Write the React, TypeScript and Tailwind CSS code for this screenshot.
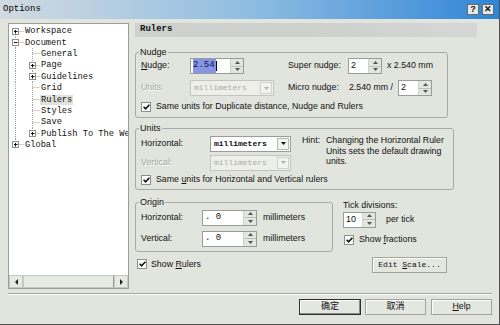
import React from 'react';

const sans = "font-['Liberation_Sans',Arial,sans-serif]";
const mono = "font-['Liberation_Mono','Courier_New',monospace]";
const cjk = "font-['Liberation_Sans','Noto_Sans_CJK_SC',sans-serif]";
const dim = 'text-[#a3a5a0] [text-shadow:1px_1px_0_#fff]';

type TreeItem = {
  level: 0 | 1;
  text: string;
  box?: '+' | '-';
  first?: boolean;
  last?: boolean;
  lastChild?: boolean;
  selected?: boolean;
};

const treeItems: TreeItem[] = [
  { level: 0, text: 'Workspace', box: '+', first: true },
  { level: 0, text: 'Document', box: '-' },
  { level: 1, text: 'General' },
  { level: 1, text: 'Page', box: '+' },
  { level: 1, text: 'Guidelines', box: '+' },
  { level: 1, text: 'Grid' },
  { level: 1, text: 'Rulers', selected: true },
  { level: 1, text: 'Styles' },
  { level: 1, text: 'Save' },
  { level: 1, text: 'Publish To The Web', box: '+', lastChild: true },
  { level: 0, text: 'Global', box: '+', last: true },
];

const ROW_H = 11.4;

const ExpandBox = ({ cx, cy, sign }: { cx: number; cy: number; sign: '+' | '-' }) => (
  <g>
    <rect x={cx - 3} y={cy - 3} width={6} height={6} fill="#fff" stroke="#8e908b" />
    <line x1={cx - 1.5} y1={cy} x2={cx + 2} y2={cy} stroke="#111" />
    {sign === '+' && <line x1={cx} y1={cy - 1.5} x2={cx} y2={cy + 2} stroke="#111" />}
  </g>
);

const TreeRow = ({ item }: { item: TreeItem }) => {
  const cy = 5.5;
  const w = item.level === 0 ? 16 : 32;
  const dots = { stroke: '#a2a4a0', strokeDasharray: '1 1' };
  return (
    <div className="flex h-[11.4px] items-center whitespace-nowrap">
      <svg width={w} height={ROW_H} className="shrink-0">
        <line x1={6.5} y1={item.first ? cy : 0} x2={6.5} y2={item.last ? cy : ROW_H} {...dots} />
        {item.level === 0 && <line x1={6.5} y1={cy} x2={15} y2={cy} {...dots} />}
        {item.level === 1 && (
          <>
            <line x1={23.5} y1={0} x2={23.5} y2={item.lastChild ? cy : ROW_H} {...dots} />
            <line x1={23.5} y1={cy} x2={31} y2={cy} {...dots} />
          </>
        )}
        {item.box && <ExpandBox cx={item.level === 0 ? 6.5 : 23.5} cy={cy} sign={item.box} />}
      </svg>
      <span className={`${mono} text-[8.7px] leading-[10px] ${item.selected ? 'bg-[#dfe2db] px-[1px] -ml-[1px]' : ''}`}>
        {item.text}
      </span>
    </div>
  );
};

const Arrow = ({ dir, color = '#222' }: { dir: 'up' | 'down' | 'left' | 'right'; color?: string }) => {
  const pts = {
    up: '0,3 5,3 2.5,0',
    down: '0,0 5,0 2.5,3',
    left: '3,0 3,6 0,3',
    right: '0,0 0,6 3,3',
  }[dir];
  const horiz = dir === 'left' || dir === 'right';
  return (
    <svg width={horiz ? 3 : 5} height={horiz ? 6 : 3}>
      <polygon points={pts} fill={color} />
    </svg>
  );
};

const Spin = ({ value, w, selected, monoText }: { value: string; w: string; selected?: boolean; monoText?: boolean }) => (
  <div className={`flex h-[16px] shrink-0 border border-[#9a9c97] bg-white ${w}`}>
    <div className={`flex flex-1 items-center pl-[2px] text-[9px] ${monoText ? mono : sans}`}>
      <span className={selected ? 'bg-[#8796e2] pr-[1px] text-[#101060]' : ''}>{value}</span>
      {selected && <span className="h-[10px] w-px bg-black" />}
    </div>
    <div className="flex w-[13px] flex-col border-l border-[#cfd1cc]">
      <span className="flex flex-1 items-center justify-center border-b border-[#bfc1bc] bg-[#e3e5df]">
        <Arrow dir="up" color="#555" />
      </span>
      <span className="flex flex-1 items-center justify-center bg-[#e3e5df]">
        <Arrow dir="down" color="#555" />
      </span>
    </div>
  </div>
);

const Combo = ({ w, disabled }: { w: string; disabled?: boolean }) => (
  <div
    className={`flex h-[16px] shrink-0 border ${w} ${
      disabled ? 'border-[#c3c5c0] bg-[#efefea]' : 'border-[#9a9c97] bg-white'
    }`}
  >
    <span
      className={`flex flex-1 items-center pl-[3px] text-[8px] ${mono} ${
        disabled ? 'text-[#a9aba6]' : 'font-bold text-[#111]'
      }`}
    >
      millimeters
    </span>
    <span
      className={`m-[1px] flex w-[12px] items-center justify-center border ${
        disabled ? 'border-[#cfd1cc] bg-[#f2f2ee]' : 'border-[#b5b7b2] bg-[#f3f4f0]'
      }`}
    >
      <Arrow dir="down" color={disabled ? '#b0b2ad' : '#111'} />
    </span>
  </div>
);

const Check = () => (
  <span className="inline-flex h-[10px] w-[10px] shrink-0 items-center justify-center border border-[#8d8f8a] bg-white">
    <svg width="7" height="6" viewBox="0 0 7 6">
      <path d="M0.6 2.8 L2.6 4.8 L6.4 0.8" stroke="#111" strokeWidth="1.6" fill="none" />
    </svg>
  </span>
);

const Group = ({ title, className, children }: { title: string; className: string; children: React.ReactNode }) => (
  <fieldset className={`rounded-[3px] border border-[#a8aaa5] px-[5px] ${className}`}>
    <legend className="-ml-[2px] px-[1px] text-[9px] leading-[10px]">{title}</legend>
    {children}
  </fieldset>
);

const Button = ({ children, primary, className = '' }: { children: React.ReactNode; primary?: boolean; className?: string }) => (
  <div
    className={`flex h-[16px] items-center justify-center bg-[#e4e6e0] ${
      primary ? 'border border-[#2f2f2f] shadow-[inset_-1px_-1px_0_#8a8c87,inset_1px_1px_0_#fff]' : 'border border-[#a2a49f] shadow-[inset_1px_1px_0_#fff]'
    } ${className}`}
  >
    {children}
  </div>
);

export default function App() {
  return (
    <div className={`flex h-[325px] w-[500px] flex-col overflow-hidden border-b border-r border-[#505050] bg-[#e2e5de] text-[8.8px] text-[#111] ${sans}`}>
      {/* title bar */}
      <div className="flex h-[19px] shrink-0 items-center bg-linear-to-r from-[#d3dae0] via-[#8ebde2] to-[#2b85d6] pl-[3px] pr-[5px]">
        <span className={`${mono} text-[9px] text-black`}>Options</span>
        <div className="ml-auto flex gap-[3px]">
          <span className="flex h-[11px] w-[12px] items-center justify-center border border-[#6a6a6a] bg-[#e8e8e6] text-[9px] font-bold leading-none">
            ?
          </span>
          <span className="flex h-[11px] w-[12px] items-center justify-center border border-[#6a6a6a] bg-[#e8e8e6] text-[9px] font-bold leading-none">
            ✕
          </span>
        </div>
      </div>

      {/* body */}
      <div className="flex shrink-0 pl-[8px] pt-[4px]">
        {/* tree */}
        <div className="flex h-[266px] w-[121px] shrink-0 flex-col border border-[#9c9e99] bg-white">
          <div className="flex-1 overflow-hidden pt-[1.5px]">
            {treeItems.map((item) => (
              <TreeRow key={item.text} item={item} />
            ))}
          </div>
          <div className="flex h-[13px] bg-[#eceee9]">
            <span className="flex w-[14px] items-center justify-center border border-[#c6c8c3] bg-[#e7e9e3]">
              <Arrow dir="left" />
            </span>
            <span className="flex-1 border border-[#c6c8c3] border-r-[#9a9c97] bg-[#e7e9e3]" />
            <span className="flex w-[14px] items-center justify-center border border-[#c6c8c3] bg-[#e7e9e3]">
              <Arrow dir="right" />
            </span>
          </div>
        </div>

        {/* settings */}
        <div className="ml-[6px] flex w-[342px] flex-col">
          <div className="flex h-[14px] items-center bg-linear-to-r from-[#cfd0cf] via-[#cdd0cb] to-[#d6d6d6] pl-[5px]">
            <span className={`${mono} text-[9px] font-bold`}>Rulers</span>
          </div>

          <Group title="Nudge" className="mt-[10px] h-[71px] w-[313px]">
            <div className="mt-[1px] flex h-[16px] items-center">
              <span className="w-[49px]">
                <span className="underline underline-offset-1">N</span>udge:
              </span>
              <Spin value="2.54" w="w-[54px]" selected monoText />
              <span className="ml-[44px] w-[60px]">Super nudge:</span>
              <Spin value="2" w="w-[34px]" />
              <span className="ml-[5px]">x 2.540 mm</span>
            </div>
            <div className="mt-[6px] flex h-[16px] items-center">
              <span className={`w-[49px] ${dim}`}>Units:</span>
              <Combo w="w-[84px]" disabled />
              <span className="ml-[14px] w-[61px]">Micro nudge:</span>
              <span className="w-[49px]">2.540 mm /</span>
              <Spin value="2" w="w-[34px]" />
            </div>
            <div className="mt-[5px] flex h-[12px] items-center gap-[5px]">
              <Check />
              <span>Same units for Duplicate distance, Nudge and Rulers</span>
            </div>
          </Group>

          <Group title="Units" className="mt-[5px] h-[67px] w-[313px]">
            <div className="flex">
              <div className="flex flex-col">
                <div className="mt-[3px] flex h-[15px] items-center">
                  <span className="w-[69px]">Horizontal:</span>
                  <Combo w="w-[81px]" />
                </div>
                <div className="mt-[4px] flex h-[15px] items-center">
                  <span className={`w-[69px] ${dim}`}>Vertical:</span>
                  <Combo w="w-[81px]" disabled />
                </div>
              </div>
              <div className="ml-[11px] mt-[2px] flex leading-[10.5px]">
                <span className="w-[24px]">Hint:</span>
                <span className="w-[122px]">
                  Changing the Horizontal Ruler Units sets the default drawing units.
                </span>
              </div>
            </div>
            <div className="mt-[4px] flex h-[12px] items-center gap-[5px]">
              <Check />
              <span>
                Same <span className="underline underline-offset-1">u</span>nits for Horizontal and Vertical rulers
              </span>
            </div>
          </Group>

          <div className="mt-[7px] flex items-start">
            <Group title="Origin" className="h-[55px] w-[198px]">
              <div className="mt-[3px] flex h-[15px] items-center">
                <span className="w-[61px]">Horizontal:</span>
                <Spin value=". 0" w="w-[55px]" monoText />
                <span className="ml-[6px]">millimeters</span>
              </div>
              <div className="mt-[6px] flex h-[15px] items-center">
                <span className="w-[61px]">Vertical:</span>
                <Spin value=". 0" w="w-[55px]" monoText />
                <span className="ml-[6px]">millimeters</span>
              </div>
            </Group>
            <div className="ml-[10px] flex flex-col">
              <span className="mt-[3px] leading-[10px]">Tick divisions:</span>
              <div className="mt-[2px] flex h-[15px] items-center">
                <Spin value="10" w="w-[33px]" />
                <span className="ml-[10px]">per tick</span>
              </div>
              <div className="mt-[8px] flex h-[10px] items-center gap-[5px] pl-[1px]">
                <Check />
                <span>
                  Show <span className="underline underline-offset-1">f</span>ractions
                </span>
              </div>
            </div>
          </div>

          <div className="mt-[5px] flex h-[16px] w-[312px] items-center">
            <span className="ml-[2px]">
              <Check />
            </span>
            <span className="ml-[4px]">
              Show <span className="underline underline-offset-1">R</span>ulers
            </span>
            <Button className="ml-auto w-[75px]">
              <span className={`${mono} text-[8px]`}>
                Edit <span className="underline underline-offset-1">S</span>cale...
              </span>
            </Button>
          </div>
        </div>
      </div>

      {/* separator */}
      <div className="ml-[8px] mr-[7px] mt-[4px] h-[2px] border-t border-b border-t-[#a5a7a2] border-b-white" />

      {/* buttons */}
      <div className="mt-[4px] flex justify-end pr-[7px]">
        <Button primary className="w-[62px]">
          <span className={`${cjk} text-[9px]`}>确定</span>
        </Button>
        <Button className="ml-[4px] w-[61px]">
          <span className={`${cjk} text-[9px]`}>取消</span>
        </Button>
        <Button className="ml-[5px] w-[61px]">
          <span>
            <span className="underline underline-offset-1">H</span>elp
          </span>
        </Button>
      </div>
    </div>
  );
}
